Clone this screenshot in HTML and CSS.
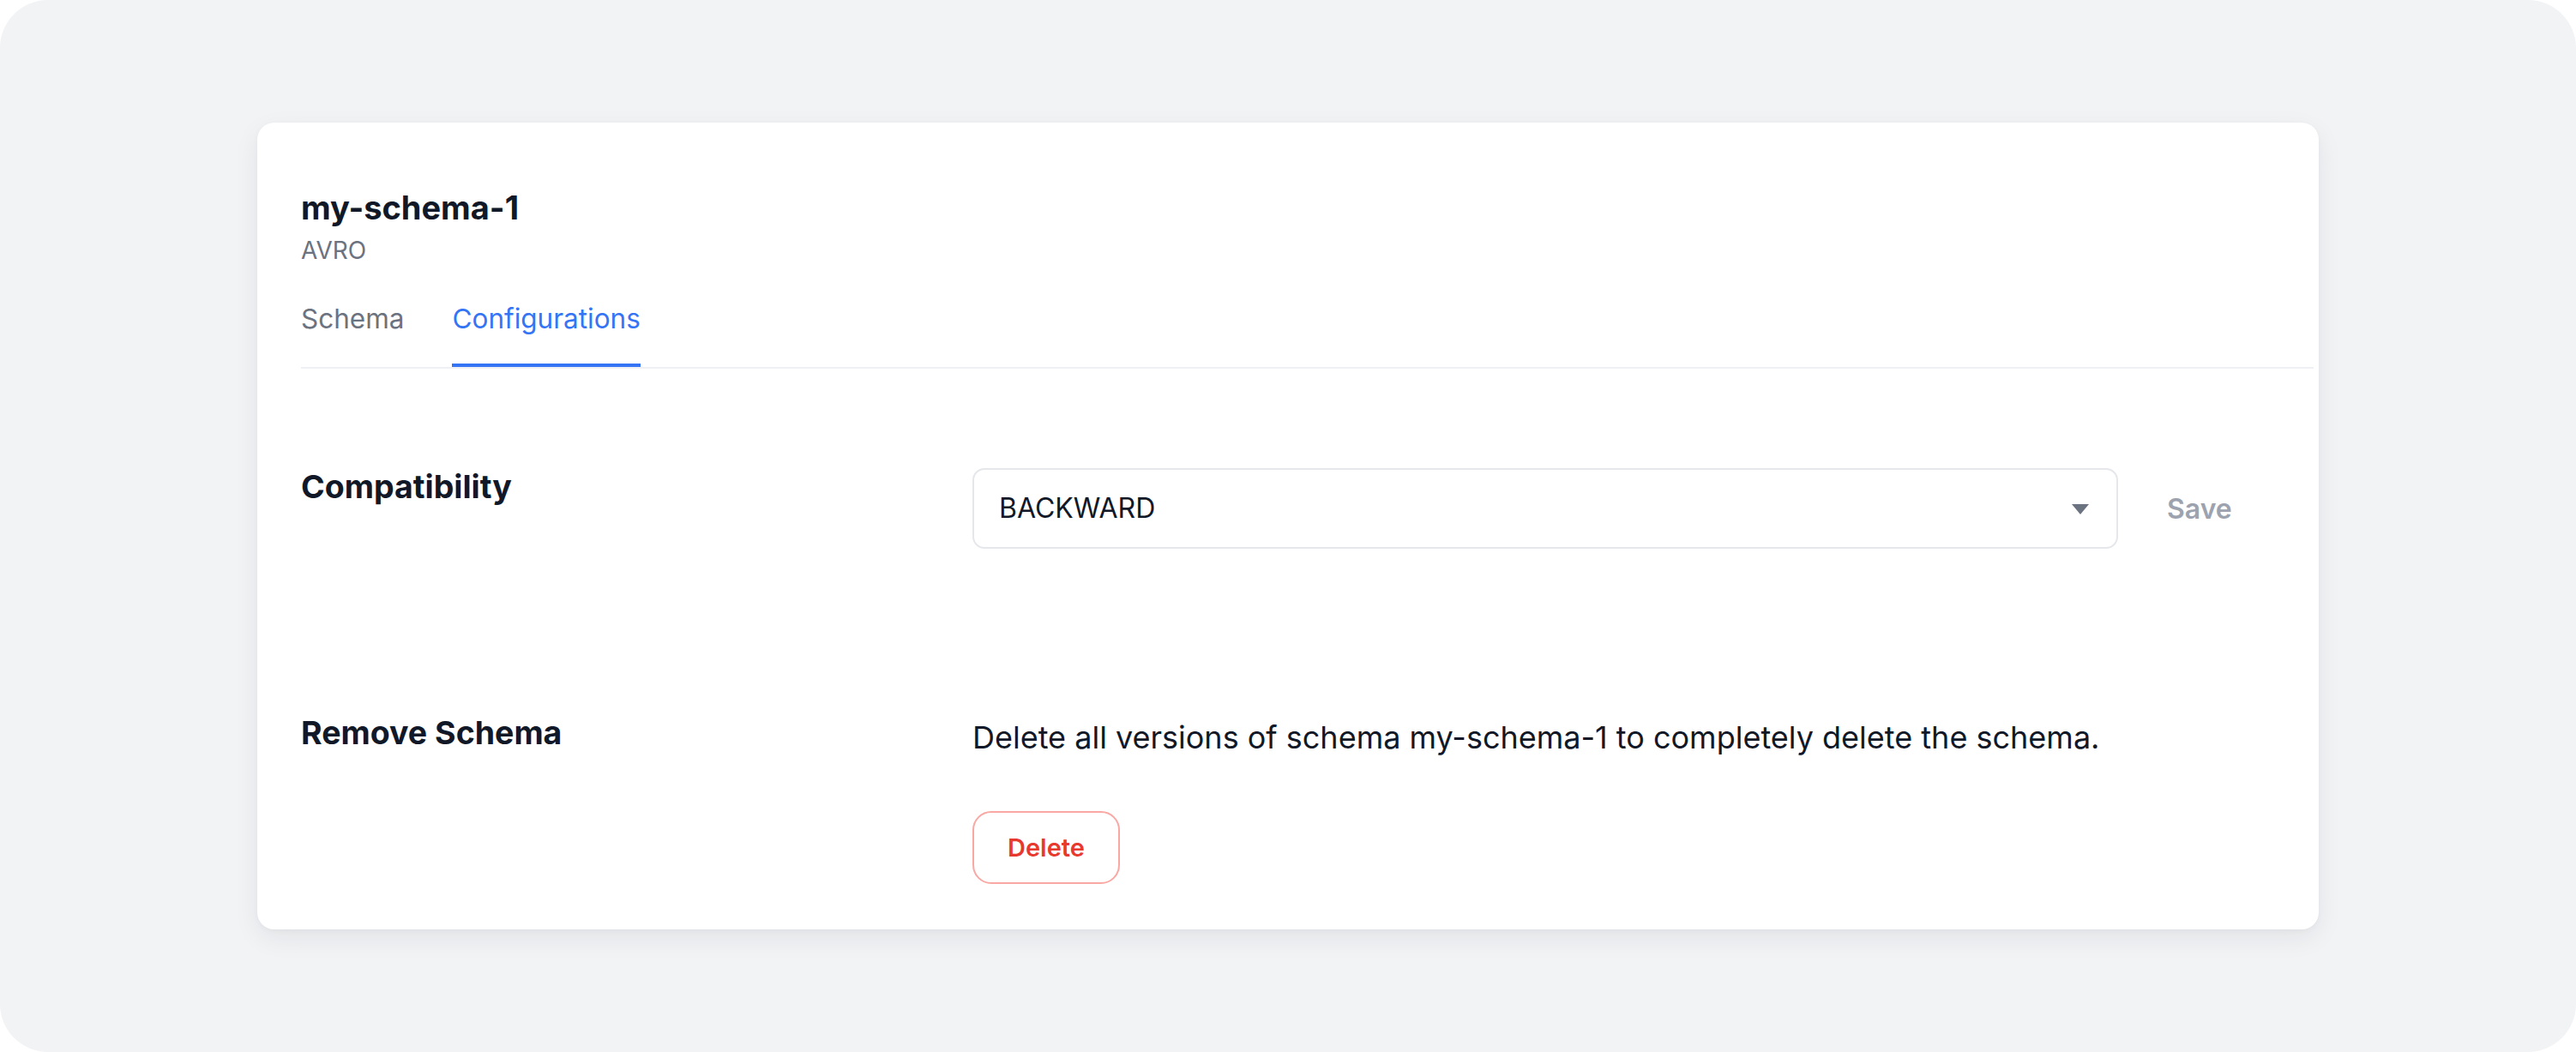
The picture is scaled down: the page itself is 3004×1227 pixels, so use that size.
FILE: index.html
```html
<!DOCTYPE html>
<html lang="en">
<head>
<meta charset="utf-8">
<title>my-schema-1 — Configurations</title>
<link rel="stylesheet" href="styles.css">
</head>
<body>
<div class="frame">
  <main class="card">
    <header class="header">
      <h1 class="title">my-schema-1</h1>
      <div class="subtitle">AVRO</div>
    </header>
    <nav class="tabs">
      <a class="tab">Schema</a>
      <a class="tab tab-active">Configurations</a>
    </nav>
    <section class="row row-compat">
      <h2 class="label">Compatibility</h2>
      <div class="control">
        <div class="select">
          <span class="select-value">BACKWARD</span>
          <svg class="caret" width="20" height="12" viewBox="0 0 20 12"><path d="M0 0 H20 L10 12 Z" fill="#6b7280"/></svg>
        </div>
        <button class="btn-save">Save</button>
      </div>
    </section>
    <section class="row row-remove">
      <h2 class="label">Remove Schema</h2>
      <div class="remove-body">
        <p class="desc">Delete all versions of schema my-schema-1 to completely delete the schema.</p>
        <button class="btn-delete">Delete</button>
      </div>
    </section>
  </main>
</div>
</body>
</html>
```

FILE: styles.css
```css
* { box-sizing: border-box; }
html, body { margin: 0; padding: 0; background: #ffffff; }
body { font-family: Inter, "Noto Sans", "Liberation Sans", sans-serif; color: #111827; }

.frame {
  height: 1227px;
  background: #f2f3f5;
  border-radius: 56px;
  padding: 143px 300px;
}

.card {
  background: #ffffff;
  border-radius: 20px;
  box-shadow: 0 10px 30px rgba(17, 24, 39, 0.07), 0 2px 6px rgba(17, 24, 39, 0.03);
  padding: 71px 6px 53px 51px;
  height: 941px;
}

.header { padding-right: 44px; }
.title {
  margin: 0;
  font-size: 38px;
  line-height: 56px;
  font-weight: 700;
  color: #111827;
}
.subtitle {
  margin-top: 2px;
  font-size: 28px;
  line-height: 40px;
  color: #6b7280;
}

.tabs {
  margin-top: 36px;
  display: flex;
  gap: 56px;
  border-bottom: 2px solid #eef0f3;
}
.tab {
  font-size: 31.5px;
  line-height: 48px;
  padding-bottom: 28px;
  border-bottom: 4px solid transparent;
  color: #6b7280;
}
.tab-active {
  color: #3574f5;
  border-bottom-color: #3574f5;
}

.row {
  display: grid;
  grid-template-columns: 783px 1fr;
  align-items: start;
  padding-right: 44px;
}
.row-compat { margin-top: 110px; }
.row-remove { margin-top: 187px; }

.label {
  margin: 0;
  font-size: 37.5px;
  line-height: 56px;
  font-weight: 700;
  color: #111827;
}

.control {
  display: flex;
  align-items: center;
  margin-top: 6px;
}
.select {
  width: 1336px;
  height: 94px;
  border: 2px solid #e5e7eb;
  border-radius: 14px;
  display: flex;
  align-items: center;
  justify-content: space-between;
  padding: 0 32px 0 29px;
}
.select-value {
  font-size: 32px;
  line-height: 48px;
  color: #111827;
}
.caret { display: block; margin-top: 2px; }

.btn-save {
  margin-left: 9px;
  padding: 0 48px;
  height: 80px;
  border: none;
  background: transparent;
  font-family: inherit;
  font-size: 32px;
  font-weight: 600;
  color: #9ca3af;
}

.remove-body { padding-top: 6px; }
.desc {
  margin: 0;
  font-size: 36px;
  line-height: 54px;
  color: #111827;
}
.btn-delete {
  margin-top: 59px;
  height: 85px;
  padding: 0 39px;
  border: 2px solid #f9a8a4;
  border-radius: 22px;
  background: #ffffff;
  font-family: inherit;
  font-size: 29px;
  font-weight: 600;
  color: #e8392f;
}
```
